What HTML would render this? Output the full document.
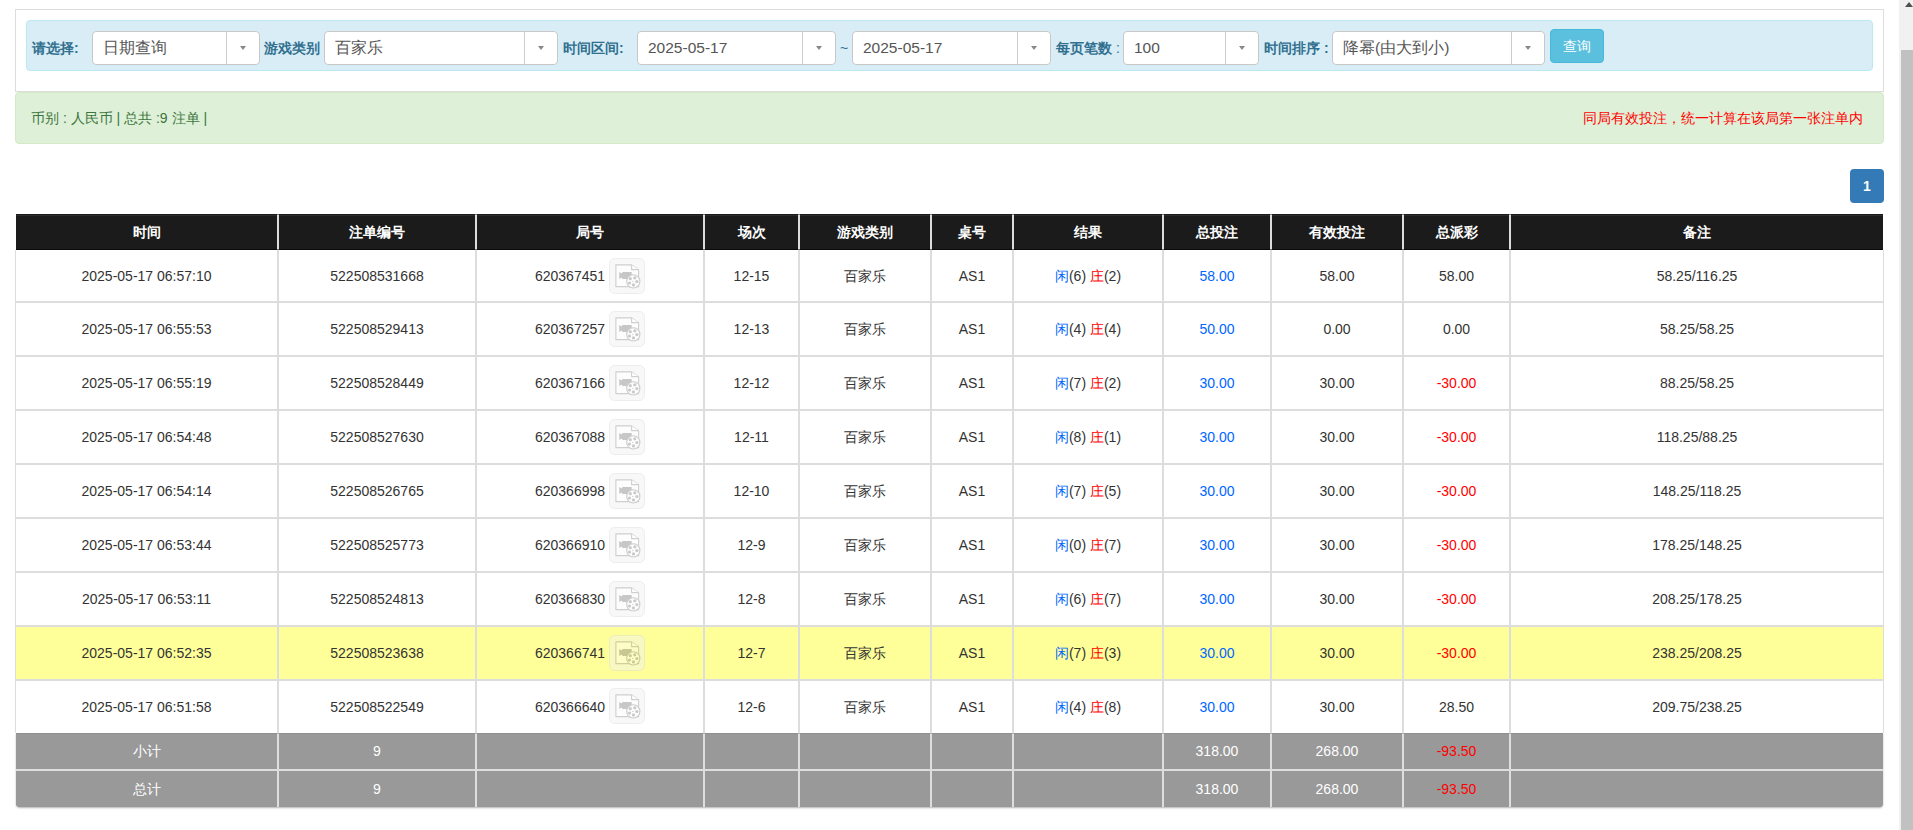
<!DOCTYPE html>
<html><head><meta charset="utf-8"><title>report</title>
<style>
html,body{margin:0;padding:0;background:#fff;overflow:hidden;width:1913px;height:830px;}
body{font-family:"Liberation Sans",sans-serif;font-size:14px;color:#333;position:relative;}
.panel{position:absolute;left:15px;top:9px;width:1867px;height:81px;border:1px solid #ddd;background:#fff;}
.info{position:absolute;left:26px;top:20px;width:1845px;height:49px;border:1px solid #bce8f1;background:#d9edf7;border-radius:4px;}
.lab{position:absolute;top:38px;height:20px;line-height:20px;font-weight:bold;color:#31708f;white-space:nowrap;}
.nb{font-weight:normal;}
.sel{position:absolute;top:31px;height:32px;border:1px solid #c8c8c8;border-radius:4px;background:#fff;box-sizing:content-box;}
.sel .st{position:absolute;left:10px;top:6px;line-height:20px;font-size:15.5px;color:#555;white-space:nowrap;}
.sel .sd{position:absolute;top:0;width:1px;height:32px;background:#ccc;}
.sel .arr{position:absolute;top:14px;width:0;height:0;border-left:3.5px solid transparent;border-right:3.5px solid transparent;border-top:4px solid #888;}
.btn{position:absolute;left:1550px;top:29px;width:52px;height:32px;border:1px solid #46b8da;background:#5bc0de;border-radius:4px;color:#fff;text-align:center;line-height:32px;font-weight:500;}
.succ{position:absolute;left:15px;top:92px;width:1867px;height:50px;border:1px solid #d6e9c6;background:#dff0d8;border-radius:4px;color:#3c763d;}
.succ .l{position:absolute;left:15px;top:15px;line-height:20px;white-space:nowrap;}
.succ .r{position:absolute;right:20px;top:15px;line-height:20px;color:#f00;white-space:nowrap;}
.page{position:absolute;left:1850px;top:169px;width:34px;height:34px;background:#337ab7;border-radius:4px;color:#fff;font-weight:bold;text-align:center;line-height:34px;}
.c{position:absolute;box-sizing:border-box;display:flex;align-items:center;justify-content:center;white-space:nowrap;border:0 solid #ddd;}
.in{display:block;line-height:20px;position:relative;top:-1px;}
.th{background:#1b1b1b;color:#fff;font-weight:bold;border-color:#dcdcdc;border-top:1px solid #1a1a1a;border-bottom:1px solid #0a0a0a;box-shadow:inset 0 1px 0 #2a2a2a;}
.th .in{top:0px;}
.tr .in{top:0px;}
.tf1 .in{top:0px;}
.tr{background:#fff;border-left-width:1px;border-right-width:1px;}
.yel{background:#ffff99;}
.tf{background:#999;color:#fff;border-color:#dedede;}
.tf0{border-top:1px solid #8f8f8f;border-bottom:1px solid #dedede;}
.tf1{border-top:1px solid #dedede;}
.tfoot{position:absolute;left:16px;top:733px;width:1867px;height:74px;border-radius:0 0 4px 4px;box-shadow:0 1px 2px rgba(0,0,0,.3);background:#999;}
.blu{color:#0066ff;}
.red{color:#ff0000;}
.gid{padding-right:40px;}
.ico{position:absolute;width:36px;height:36px;}
.ico svg{display:block;}
.sb{position:absolute;left:1899px;top:0;width:17px;height:830px;background:#f1f1f1;}
.sb .thumb{position:absolute;left:2px;top:50px;width:13px;height:780px;background:#c1c1c1;}
.sb .up{position:absolute;left:6px;top:2px;width:0;height:0;border-left:4px solid transparent;border-right:4px solid transparent;border-bottom:5px solid #505050;}
</style></head><body>
<div class="panel"></div>
<div class="info"></div>
<div class="lab" style="left:32px">请选择:</div><div class="sel" style="left:92px;width:166px"><span class="st">日期查询</span><div class="sd" style="left:133px"></div><div class="arr" style="left:147px"></div></div><div class="lab" style="left:264px">游戏类别</div><div class="sel" style="left:324px;width:232px"><span class="st">百家乐</span><div class="sd" style="left:199px"></div><div class="arr" style="left:213px"></div></div><div class="lab" style="left:563px">时间区间:</div><div class="sel" style="left:637px;width:197px"><span class="st">2025-05-17</span><div class="sd" style="left:164px"></div><div class="arr" style="left:178px"></div></div><div class="lab nb" style="left:840px">~</div><div class="sel" style="left:852px;width:197px"><span class="st">2025-05-17</span><div class="sd" style="left:164px"></div><div class="arr" style="left:178px"></div></div><div class="lab" style="left:1056px">每页笔数 <span class="nb">:</span></div><div class="sel" style="left:1123px;width:134px"><span class="st">100</span><div class="sd" style="left:101px"></div><div class="arr" style="left:115px"></div></div><div class="lab" style="left:1264px">时间排序 :</div><div class="sel" style="left:1332px;width:211px"><span class="st">降幂(由大到小)</span><div class="sd" style="left:178px"></div><div class="arr" style="left:192px"></div></div><div class="btn">查询</div>
<div class="succ"><span class="l">币别 : 人民币 | 总共 :9 注单 |</span><span class="r">同局有效投注，统一计算在该局第一张注单内</span></div>
<div class="page">1</div>
<div class="tfoot"></div>
<div class="c th" style="left:16px;top:214px;width:262px;height:36px;border-right-width:1px"><span class="in">时间</span></div>
<div class="c th" style="left:278px;top:214px;width:198px;height:36px;border-left-width:1px;border-right-width:1px"><span class="in">注单编号</span></div>
<div class="c th" style="left:476px;top:214px;width:228px;height:36px;border-left-width:1px;border-right-width:1px"><span class="in">局号</span></div>
<div class="c th" style="left:704px;top:214px;width:95px;height:36px;border-left-width:1px;border-right-width:1px"><span class="in">场次</span></div>
<div class="c th" style="left:799px;top:214px;width:132px;height:36px;border-left-width:1px;border-right-width:1px"><span class="in">游戏类别</span></div>
<div class="c th" style="left:931px;top:214px;width:82px;height:36px;border-left-width:1px;border-right-width:1px"><span class="in">桌号</span></div>
<div class="c th" style="left:1013px;top:214px;width:150px;height:36px;border-left-width:1px;border-right-width:1px"><span class="in">结果</span></div>
<div class="c th" style="left:1163px;top:214px;width:108px;height:36px;border-left-width:1px;border-right-width:1px"><span class="in">总投注</span></div>
<div class="c th" style="left:1271px;top:214px;width:132px;height:36px;border-left-width:1px;border-right-width:1px"><span class="in">有效投注</span></div>
<div class="c th" style="left:1403px;top:214px;width:107px;height:36px;border-left-width:1px;border-right-width:1px"><span class="in">总派彩</span></div>
<div class="c th" style="left:1510px;top:214px;width:373px;height:36px;border-left-width:1px"><span class="in">备注</span></div>
<div class="c tr" style="left:15px;top:250px;width:263px;height:52px;border-top-width:0px;border-bottom-width:1px"><span class="in">2025-05-17 06:57:10</span></div>
<div class="c tr" style="left:278px;top:250px;width:198px;height:52px;border-top-width:0px;border-bottom-width:1px"><span class="in">522508531668</span></div>
<div class="c tr" style="left:476px;top:250px;width:228px;height:52px;border-top-width:0px;border-bottom-width:1px"><span class="in"><span class="gid">620367451</span></span><span class="ico" style="left:132px;top:8px"><svg width="36" height="36" viewBox="0 0 36 36" style="opacity:.47"><rect x="0.5" y="0.5" width="35" height="35" rx="5" fill="#f2f2f2" stroke="#d9d9d9"/><path d="M6.9 6.9H22.6L29.6 11.8V28.6H6.9Z" fill="#fcfcfc" stroke="#9a9a9a" stroke-width="1.1"/><path d="M22.6 6.9V11.6H29.6" fill="#fff" stroke="#9a9a9a" stroke-width="1.1"/><path d="M10.2 14L12.6 15.5L13.5 14H22.7V20.9H13.5L12.6 19.4L10.2 20.9Z" fill="#8a8a8a"/><circle cx="24.3" cy="23.4" r="6.6" fill="#fcfcfc" stroke="#949494" stroke-width="1.1"/><circle cx="21.3" cy="20.7" r="1.6" fill="#8f8f8f"/><circle cx="25.8" cy="19.8" r="1.6" fill="#8f8f8f"/><circle cx="27.9" cy="23.6" r="1.6" fill="#8f8f8f"/><circle cx="24.5" cy="26.9" r="1.6" fill="#8f8f8f"/><circle cx="20.5" cy="25" r="1.6" fill="#8f8f8f"/><circle cx="23.8" cy="23.4" r=".6" fill="#8f8f8f"/></svg></span></div>
<div class="c tr" style="left:704px;top:250px;width:95px;height:52px;border-top-width:0px;border-bottom-width:1px"><span class="in">12-15</span></div>
<div class="c tr" style="left:799px;top:250px;width:132px;height:52px;border-top-width:0px;border-bottom-width:1px"><span class="in">百家乐</span></div>
<div class="c tr" style="left:931px;top:250px;width:82px;height:52px;border-top-width:0px;border-bottom-width:1px"><span class="in">AS1</span></div>
<div class="c tr" style="left:1013px;top:250px;width:150px;height:52px;border-top-width:0px;border-bottom-width:1px"><span class="in"><span class="blu">闲</span>(6) <span class="red">庄</span>(2)</span></div>
<div class="c tr" style="left:1163px;top:250px;width:108px;height:52px;border-top-width:0px;border-bottom-width:1px"><span class="in"><span class="blu">58.00</span></span></div>
<div class="c tr" style="left:1271px;top:250px;width:132px;height:52px;border-top-width:0px;border-bottom-width:1px"><span class="in">58.00</span></div>
<div class="c tr" style="left:1403px;top:250px;width:107px;height:52px;border-top-width:0px;border-bottom-width:1px"><span class="in"><span>58.00</span></span></div>
<div class="c tr" style="left:1510px;top:250px;width:374px;height:52px;border-top-width:0px;border-bottom-width:1px"><span class="in">58.25/116.25</span></div>
<div class="c tr" style="left:15px;top:302px;width:263px;height:54px;border-top-width:1px;border-bottom-width:1px"><span class="in">2025-05-17 06:55:53</span></div>
<div class="c tr" style="left:278px;top:302px;width:198px;height:54px;border-top-width:1px;border-bottom-width:1px"><span class="in">522508529413</span></div>
<div class="c tr" style="left:476px;top:302px;width:228px;height:54px;border-top-width:1px;border-bottom-width:1px"><span class="in"><span class="gid">620367257</span></span><span class="ico" style="left:132px;top:8px"><svg width="36" height="36" viewBox="0 0 36 36" style="opacity:.47"><rect x="0.5" y="0.5" width="35" height="35" rx="5" fill="#f2f2f2" stroke="#d9d9d9"/><path d="M6.9 6.9H22.6L29.6 11.8V28.6H6.9Z" fill="#fcfcfc" stroke="#9a9a9a" stroke-width="1.1"/><path d="M22.6 6.9V11.6H29.6" fill="#fff" stroke="#9a9a9a" stroke-width="1.1"/><path d="M10.2 14L12.6 15.5L13.5 14H22.7V20.9H13.5L12.6 19.4L10.2 20.9Z" fill="#8a8a8a"/><circle cx="24.3" cy="23.4" r="6.6" fill="#fcfcfc" stroke="#949494" stroke-width="1.1"/><circle cx="21.3" cy="20.7" r="1.6" fill="#8f8f8f"/><circle cx="25.8" cy="19.8" r="1.6" fill="#8f8f8f"/><circle cx="27.9" cy="23.6" r="1.6" fill="#8f8f8f"/><circle cx="24.5" cy="26.9" r="1.6" fill="#8f8f8f"/><circle cx="20.5" cy="25" r="1.6" fill="#8f8f8f"/><circle cx="23.8" cy="23.4" r=".6" fill="#8f8f8f"/></svg></span></div>
<div class="c tr" style="left:704px;top:302px;width:95px;height:54px;border-top-width:1px;border-bottom-width:1px"><span class="in">12-13</span></div>
<div class="c tr" style="left:799px;top:302px;width:132px;height:54px;border-top-width:1px;border-bottom-width:1px"><span class="in">百家乐</span></div>
<div class="c tr" style="left:931px;top:302px;width:82px;height:54px;border-top-width:1px;border-bottom-width:1px"><span class="in">AS1</span></div>
<div class="c tr" style="left:1013px;top:302px;width:150px;height:54px;border-top-width:1px;border-bottom-width:1px"><span class="in"><span class="blu">闲</span>(4) <span class="red">庄</span>(4)</span></div>
<div class="c tr" style="left:1163px;top:302px;width:108px;height:54px;border-top-width:1px;border-bottom-width:1px"><span class="in"><span class="blu">50.00</span></span></div>
<div class="c tr" style="left:1271px;top:302px;width:132px;height:54px;border-top-width:1px;border-bottom-width:1px"><span class="in">0.00</span></div>
<div class="c tr" style="left:1403px;top:302px;width:107px;height:54px;border-top-width:1px;border-bottom-width:1px"><span class="in"><span>0.00</span></span></div>
<div class="c tr" style="left:1510px;top:302px;width:374px;height:54px;border-top-width:1px;border-bottom-width:1px"><span class="in">58.25/58.25</span></div>
<div class="c tr" style="left:15px;top:356px;width:263px;height:54px;border-top-width:1px;border-bottom-width:1px"><span class="in">2025-05-17 06:55:19</span></div>
<div class="c tr" style="left:278px;top:356px;width:198px;height:54px;border-top-width:1px;border-bottom-width:1px"><span class="in">522508528449</span></div>
<div class="c tr" style="left:476px;top:356px;width:228px;height:54px;border-top-width:1px;border-bottom-width:1px"><span class="in"><span class="gid">620367166</span></span><span class="ico" style="left:132px;top:8px"><svg width="36" height="36" viewBox="0 0 36 36" style="opacity:.47"><rect x="0.5" y="0.5" width="35" height="35" rx="5" fill="#f2f2f2" stroke="#d9d9d9"/><path d="M6.9 6.9H22.6L29.6 11.8V28.6H6.9Z" fill="#fcfcfc" stroke="#9a9a9a" stroke-width="1.1"/><path d="M22.6 6.9V11.6H29.6" fill="#fff" stroke="#9a9a9a" stroke-width="1.1"/><path d="M10.2 14L12.6 15.5L13.5 14H22.7V20.9H13.5L12.6 19.4L10.2 20.9Z" fill="#8a8a8a"/><circle cx="24.3" cy="23.4" r="6.6" fill="#fcfcfc" stroke="#949494" stroke-width="1.1"/><circle cx="21.3" cy="20.7" r="1.6" fill="#8f8f8f"/><circle cx="25.8" cy="19.8" r="1.6" fill="#8f8f8f"/><circle cx="27.9" cy="23.6" r="1.6" fill="#8f8f8f"/><circle cx="24.5" cy="26.9" r="1.6" fill="#8f8f8f"/><circle cx="20.5" cy="25" r="1.6" fill="#8f8f8f"/><circle cx="23.8" cy="23.4" r=".6" fill="#8f8f8f"/></svg></span></div>
<div class="c tr" style="left:704px;top:356px;width:95px;height:54px;border-top-width:1px;border-bottom-width:1px"><span class="in">12-12</span></div>
<div class="c tr" style="left:799px;top:356px;width:132px;height:54px;border-top-width:1px;border-bottom-width:1px"><span class="in">百家乐</span></div>
<div class="c tr" style="left:931px;top:356px;width:82px;height:54px;border-top-width:1px;border-bottom-width:1px"><span class="in">AS1</span></div>
<div class="c tr" style="left:1013px;top:356px;width:150px;height:54px;border-top-width:1px;border-bottom-width:1px"><span class="in"><span class="blu">闲</span>(7) <span class="red">庄</span>(2)</span></div>
<div class="c tr" style="left:1163px;top:356px;width:108px;height:54px;border-top-width:1px;border-bottom-width:1px"><span class="in"><span class="blu">30.00</span></span></div>
<div class="c tr" style="left:1271px;top:356px;width:132px;height:54px;border-top-width:1px;border-bottom-width:1px"><span class="in">30.00</span></div>
<div class="c tr" style="left:1403px;top:356px;width:107px;height:54px;border-top-width:1px;border-bottom-width:1px"><span class="in"><span class="red">-30.00</span></span></div>
<div class="c tr" style="left:1510px;top:356px;width:374px;height:54px;border-top-width:1px;border-bottom-width:1px"><span class="in">88.25/58.25</span></div>
<div class="c tr" style="left:15px;top:410px;width:263px;height:54px;border-top-width:1px;border-bottom-width:1px"><span class="in">2025-05-17 06:54:48</span></div>
<div class="c tr" style="left:278px;top:410px;width:198px;height:54px;border-top-width:1px;border-bottom-width:1px"><span class="in">522508527630</span></div>
<div class="c tr" style="left:476px;top:410px;width:228px;height:54px;border-top-width:1px;border-bottom-width:1px"><span class="in"><span class="gid">620367088</span></span><span class="ico" style="left:132px;top:8px"><svg width="36" height="36" viewBox="0 0 36 36" style="opacity:.47"><rect x="0.5" y="0.5" width="35" height="35" rx="5" fill="#f2f2f2" stroke="#d9d9d9"/><path d="M6.9 6.9H22.6L29.6 11.8V28.6H6.9Z" fill="#fcfcfc" stroke="#9a9a9a" stroke-width="1.1"/><path d="M22.6 6.9V11.6H29.6" fill="#fff" stroke="#9a9a9a" stroke-width="1.1"/><path d="M10.2 14L12.6 15.5L13.5 14H22.7V20.9H13.5L12.6 19.4L10.2 20.9Z" fill="#8a8a8a"/><circle cx="24.3" cy="23.4" r="6.6" fill="#fcfcfc" stroke="#949494" stroke-width="1.1"/><circle cx="21.3" cy="20.7" r="1.6" fill="#8f8f8f"/><circle cx="25.8" cy="19.8" r="1.6" fill="#8f8f8f"/><circle cx="27.9" cy="23.6" r="1.6" fill="#8f8f8f"/><circle cx="24.5" cy="26.9" r="1.6" fill="#8f8f8f"/><circle cx="20.5" cy="25" r="1.6" fill="#8f8f8f"/><circle cx="23.8" cy="23.4" r=".6" fill="#8f8f8f"/></svg></span></div>
<div class="c tr" style="left:704px;top:410px;width:95px;height:54px;border-top-width:1px;border-bottom-width:1px"><span class="in">12-11</span></div>
<div class="c tr" style="left:799px;top:410px;width:132px;height:54px;border-top-width:1px;border-bottom-width:1px"><span class="in">百家乐</span></div>
<div class="c tr" style="left:931px;top:410px;width:82px;height:54px;border-top-width:1px;border-bottom-width:1px"><span class="in">AS1</span></div>
<div class="c tr" style="left:1013px;top:410px;width:150px;height:54px;border-top-width:1px;border-bottom-width:1px"><span class="in"><span class="blu">闲</span>(8) <span class="red">庄</span>(1)</span></div>
<div class="c tr" style="left:1163px;top:410px;width:108px;height:54px;border-top-width:1px;border-bottom-width:1px"><span class="in"><span class="blu">30.00</span></span></div>
<div class="c tr" style="left:1271px;top:410px;width:132px;height:54px;border-top-width:1px;border-bottom-width:1px"><span class="in">30.00</span></div>
<div class="c tr" style="left:1403px;top:410px;width:107px;height:54px;border-top-width:1px;border-bottom-width:1px"><span class="in"><span class="red">-30.00</span></span></div>
<div class="c tr" style="left:1510px;top:410px;width:374px;height:54px;border-top-width:1px;border-bottom-width:1px"><span class="in">118.25/88.25</span></div>
<div class="c tr" style="left:15px;top:464px;width:263px;height:54px;border-top-width:1px;border-bottom-width:1px"><span class="in">2025-05-17 06:54:14</span></div>
<div class="c tr" style="left:278px;top:464px;width:198px;height:54px;border-top-width:1px;border-bottom-width:1px"><span class="in">522508526765</span></div>
<div class="c tr" style="left:476px;top:464px;width:228px;height:54px;border-top-width:1px;border-bottom-width:1px"><span class="in"><span class="gid">620366998</span></span><span class="ico" style="left:132px;top:8px"><svg width="36" height="36" viewBox="0 0 36 36" style="opacity:.47"><rect x="0.5" y="0.5" width="35" height="35" rx="5" fill="#f2f2f2" stroke="#d9d9d9"/><path d="M6.9 6.9H22.6L29.6 11.8V28.6H6.9Z" fill="#fcfcfc" stroke="#9a9a9a" stroke-width="1.1"/><path d="M22.6 6.9V11.6H29.6" fill="#fff" stroke="#9a9a9a" stroke-width="1.1"/><path d="M10.2 14L12.6 15.5L13.5 14H22.7V20.9H13.5L12.6 19.4L10.2 20.9Z" fill="#8a8a8a"/><circle cx="24.3" cy="23.4" r="6.6" fill="#fcfcfc" stroke="#949494" stroke-width="1.1"/><circle cx="21.3" cy="20.7" r="1.6" fill="#8f8f8f"/><circle cx="25.8" cy="19.8" r="1.6" fill="#8f8f8f"/><circle cx="27.9" cy="23.6" r="1.6" fill="#8f8f8f"/><circle cx="24.5" cy="26.9" r="1.6" fill="#8f8f8f"/><circle cx="20.5" cy="25" r="1.6" fill="#8f8f8f"/><circle cx="23.8" cy="23.4" r=".6" fill="#8f8f8f"/></svg></span></div>
<div class="c tr" style="left:704px;top:464px;width:95px;height:54px;border-top-width:1px;border-bottom-width:1px"><span class="in">12-10</span></div>
<div class="c tr" style="left:799px;top:464px;width:132px;height:54px;border-top-width:1px;border-bottom-width:1px"><span class="in">百家乐</span></div>
<div class="c tr" style="left:931px;top:464px;width:82px;height:54px;border-top-width:1px;border-bottom-width:1px"><span class="in">AS1</span></div>
<div class="c tr" style="left:1013px;top:464px;width:150px;height:54px;border-top-width:1px;border-bottom-width:1px"><span class="in"><span class="blu">闲</span>(7) <span class="red">庄</span>(5)</span></div>
<div class="c tr" style="left:1163px;top:464px;width:108px;height:54px;border-top-width:1px;border-bottom-width:1px"><span class="in"><span class="blu">30.00</span></span></div>
<div class="c tr" style="left:1271px;top:464px;width:132px;height:54px;border-top-width:1px;border-bottom-width:1px"><span class="in">30.00</span></div>
<div class="c tr" style="left:1403px;top:464px;width:107px;height:54px;border-top-width:1px;border-bottom-width:1px"><span class="in"><span class="red">-30.00</span></span></div>
<div class="c tr" style="left:1510px;top:464px;width:374px;height:54px;border-top-width:1px;border-bottom-width:1px"><span class="in">148.25/118.25</span></div>
<div class="c tr" style="left:15px;top:518px;width:263px;height:54px;border-top-width:1px;border-bottom-width:1px"><span class="in">2025-05-17 06:53:44</span></div>
<div class="c tr" style="left:278px;top:518px;width:198px;height:54px;border-top-width:1px;border-bottom-width:1px"><span class="in">522508525773</span></div>
<div class="c tr" style="left:476px;top:518px;width:228px;height:54px;border-top-width:1px;border-bottom-width:1px"><span class="in"><span class="gid">620366910</span></span><span class="ico" style="left:132px;top:8px"><svg width="36" height="36" viewBox="0 0 36 36" style="opacity:.47"><rect x="0.5" y="0.5" width="35" height="35" rx="5" fill="#f2f2f2" stroke="#d9d9d9"/><path d="M6.9 6.9H22.6L29.6 11.8V28.6H6.9Z" fill="#fcfcfc" stroke="#9a9a9a" stroke-width="1.1"/><path d="M22.6 6.9V11.6H29.6" fill="#fff" stroke="#9a9a9a" stroke-width="1.1"/><path d="M10.2 14L12.6 15.5L13.5 14H22.7V20.9H13.5L12.6 19.4L10.2 20.9Z" fill="#8a8a8a"/><circle cx="24.3" cy="23.4" r="6.6" fill="#fcfcfc" stroke="#949494" stroke-width="1.1"/><circle cx="21.3" cy="20.7" r="1.6" fill="#8f8f8f"/><circle cx="25.8" cy="19.8" r="1.6" fill="#8f8f8f"/><circle cx="27.9" cy="23.6" r="1.6" fill="#8f8f8f"/><circle cx="24.5" cy="26.9" r="1.6" fill="#8f8f8f"/><circle cx="20.5" cy="25" r="1.6" fill="#8f8f8f"/><circle cx="23.8" cy="23.4" r=".6" fill="#8f8f8f"/></svg></span></div>
<div class="c tr" style="left:704px;top:518px;width:95px;height:54px;border-top-width:1px;border-bottom-width:1px"><span class="in">12-9</span></div>
<div class="c tr" style="left:799px;top:518px;width:132px;height:54px;border-top-width:1px;border-bottom-width:1px"><span class="in">百家乐</span></div>
<div class="c tr" style="left:931px;top:518px;width:82px;height:54px;border-top-width:1px;border-bottom-width:1px"><span class="in">AS1</span></div>
<div class="c tr" style="left:1013px;top:518px;width:150px;height:54px;border-top-width:1px;border-bottom-width:1px"><span class="in"><span class="blu">闲</span>(0) <span class="red">庄</span>(7)</span></div>
<div class="c tr" style="left:1163px;top:518px;width:108px;height:54px;border-top-width:1px;border-bottom-width:1px"><span class="in"><span class="blu">30.00</span></span></div>
<div class="c tr" style="left:1271px;top:518px;width:132px;height:54px;border-top-width:1px;border-bottom-width:1px"><span class="in">30.00</span></div>
<div class="c tr" style="left:1403px;top:518px;width:107px;height:54px;border-top-width:1px;border-bottom-width:1px"><span class="in"><span class="red">-30.00</span></span></div>
<div class="c tr" style="left:1510px;top:518px;width:374px;height:54px;border-top-width:1px;border-bottom-width:1px"><span class="in">178.25/148.25</span></div>
<div class="c tr" style="left:15px;top:572px;width:263px;height:54px;border-top-width:1px;border-bottom-width:1px"><span class="in">2025-05-17 06:53:11</span></div>
<div class="c tr" style="left:278px;top:572px;width:198px;height:54px;border-top-width:1px;border-bottom-width:1px"><span class="in">522508524813</span></div>
<div class="c tr" style="left:476px;top:572px;width:228px;height:54px;border-top-width:1px;border-bottom-width:1px"><span class="in"><span class="gid">620366830</span></span><span class="ico" style="left:132px;top:8px"><svg width="36" height="36" viewBox="0 0 36 36" style="opacity:.47"><rect x="0.5" y="0.5" width="35" height="35" rx="5" fill="#f2f2f2" stroke="#d9d9d9"/><path d="M6.9 6.9H22.6L29.6 11.8V28.6H6.9Z" fill="#fcfcfc" stroke="#9a9a9a" stroke-width="1.1"/><path d="M22.6 6.9V11.6H29.6" fill="#fff" stroke="#9a9a9a" stroke-width="1.1"/><path d="M10.2 14L12.6 15.5L13.5 14H22.7V20.9H13.5L12.6 19.4L10.2 20.9Z" fill="#8a8a8a"/><circle cx="24.3" cy="23.4" r="6.6" fill="#fcfcfc" stroke="#949494" stroke-width="1.1"/><circle cx="21.3" cy="20.7" r="1.6" fill="#8f8f8f"/><circle cx="25.8" cy="19.8" r="1.6" fill="#8f8f8f"/><circle cx="27.9" cy="23.6" r="1.6" fill="#8f8f8f"/><circle cx="24.5" cy="26.9" r="1.6" fill="#8f8f8f"/><circle cx="20.5" cy="25" r="1.6" fill="#8f8f8f"/><circle cx="23.8" cy="23.4" r=".6" fill="#8f8f8f"/></svg></span></div>
<div class="c tr" style="left:704px;top:572px;width:95px;height:54px;border-top-width:1px;border-bottom-width:1px"><span class="in">12-8</span></div>
<div class="c tr" style="left:799px;top:572px;width:132px;height:54px;border-top-width:1px;border-bottom-width:1px"><span class="in">百家乐</span></div>
<div class="c tr" style="left:931px;top:572px;width:82px;height:54px;border-top-width:1px;border-bottom-width:1px"><span class="in">AS1</span></div>
<div class="c tr" style="left:1013px;top:572px;width:150px;height:54px;border-top-width:1px;border-bottom-width:1px"><span class="in"><span class="blu">闲</span>(6) <span class="red">庄</span>(7)</span></div>
<div class="c tr" style="left:1163px;top:572px;width:108px;height:54px;border-top-width:1px;border-bottom-width:1px"><span class="in"><span class="blu">30.00</span></span></div>
<div class="c tr" style="left:1271px;top:572px;width:132px;height:54px;border-top-width:1px;border-bottom-width:1px"><span class="in">30.00</span></div>
<div class="c tr" style="left:1403px;top:572px;width:107px;height:54px;border-top-width:1px;border-bottom-width:1px"><span class="in"><span class="red">-30.00</span></span></div>
<div class="c tr" style="left:1510px;top:572px;width:374px;height:54px;border-top-width:1px;border-bottom-width:1px"><span class="in">208.25/178.25</span></div>
<div class="c tr yel" style="left:15px;top:626px;width:263px;height:54px;border-top-width:1px;border-bottom-width:1px"><span class="in">2025-05-17 06:52:35</span></div>
<div class="c tr yel" style="left:278px;top:626px;width:198px;height:54px;border-top-width:1px;border-bottom-width:1px"><span class="in">522508523638</span></div>
<div class="c tr yel" style="left:476px;top:626px;width:228px;height:54px;border-top-width:1px;border-bottom-width:1px"><span class="in"><span class="gid">620366741</span></span><span class="ico" style="left:132px;top:8px"><svg width="36" height="36" viewBox="0 0 36 36" style="opacity:.47"><rect x="0.5" y="0.5" width="35" height="35" rx="5" fill="#f2f2f2" stroke="#d9d9d9"/><path d="M6.9 6.9H22.6L29.6 11.8V28.6H6.9Z" fill="#fcfcfc" stroke="#9a9a9a" stroke-width="1.1"/><path d="M22.6 6.9V11.6H29.6" fill="#fff" stroke="#9a9a9a" stroke-width="1.1"/><path d="M10.2 14L12.6 15.5L13.5 14H22.7V20.9H13.5L12.6 19.4L10.2 20.9Z" fill="#8a8a8a"/><circle cx="24.3" cy="23.4" r="6.6" fill="#fcfcfc" stroke="#949494" stroke-width="1.1"/><circle cx="21.3" cy="20.7" r="1.6" fill="#8f8f8f"/><circle cx="25.8" cy="19.8" r="1.6" fill="#8f8f8f"/><circle cx="27.9" cy="23.6" r="1.6" fill="#8f8f8f"/><circle cx="24.5" cy="26.9" r="1.6" fill="#8f8f8f"/><circle cx="20.5" cy="25" r="1.6" fill="#8f8f8f"/><circle cx="23.8" cy="23.4" r=".6" fill="#8f8f8f"/></svg></span></div>
<div class="c tr yel" style="left:704px;top:626px;width:95px;height:54px;border-top-width:1px;border-bottom-width:1px"><span class="in">12-7</span></div>
<div class="c tr yel" style="left:799px;top:626px;width:132px;height:54px;border-top-width:1px;border-bottom-width:1px"><span class="in">百家乐</span></div>
<div class="c tr yel" style="left:931px;top:626px;width:82px;height:54px;border-top-width:1px;border-bottom-width:1px"><span class="in">AS1</span></div>
<div class="c tr yel" style="left:1013px;top:626px;width:150px;height:54px;border-top-width:1px;border-bottom-width:1px"><span class="in"><span class="blu">闲</span>(7) <span class="red">庄</span>(3)</span></div>
<div class="c tr yel" style="left:1163px;top:626px;width:108px;height:54px;border-top-width:1px;border-bottom-width:1px"><span class="in"><span class="blu">30.00</span></span></div>
<div class="c tr yel" style="left:1271px;top:626px;width:132px;height:54px;border-top-width:1px;border-bottom-width:1px"><span class="in">30.00</span></div>
<div class="c tr yel" style="left:1403px;top:626px;width:107px;height:54px;border-top-width:1px;border-bottom-width:1px"><span class="in"><span class="red">-30.00</span></span></div>
<div class="c tr yel" style="left:1510px;top:626px;width:374px;height:54px;border-top-width:1px;border-bottom-width:1px"><span class="in">238.25/208.25</span></div>
<div class="c tr" style="left:15px;top:680px;width:263px;height:53px;border-top-width:1px;border-bottom-width:0px"><span class="in">2025-05-17 06:51:58</span></div>
<div class="c tr" style="left:278px;top:680px;width:198px;height:53px;border-top-width:1px;border-bottom-width:0px"><span class="in">522508522549</span></div>
<div class="c tr" style="left:476px;top:680px;width:228px;height:53px;border-top-width:1px;border-bottom-width:0px"><span class="in"><span class="gid">620366640</span></span><span class="ico" style="left:132px;top:7px"><svg width="36" height="36" viewBox="0 0 36 36" style="opacity:.47"><rect x="0.5" y="0.5" width="35" height="35" rx="5" fill="#f2f2f2" stroke="#d9d9d9"/><path d="M6.9 6.9H22.6L29.6 11.8V28.6H6.9Z" fill="#fcfcfc" stroke="#9a9a9a" stroke-width="1.1"/><path d="M22.6 6.9V11.6H29.6" fill="#fff" stroke="#9a9a9a" stroke-width="1.1"/><path d="M10.2 14L12.6 15.5L13.5 14H22.7V20.9H13.5L12.6 19.4L10.2 20.9Z" fill="#8a8a8a"/><circle cx="24.3" cy="23.4" r="6.6" fill="#fcfcfc" stroke="#949494" stroke-width="1.1"/><circle cx="21.3" cy="20.7" r="1.6" fill="#8f8f8f"/><circle cx="25.8" cy="19.8" r="1.6" fill="#8f8f8f"/><circle cx="27.9" cy="23.6" r="1.6" fill="#8f8f8f"/><circle cx="24.5" cy="26.9" r="1.6" fill="#8f8f8f"/><circle cx="20.5" cy="25" r="1.6" fill="#8f8f8f"/><circle cx="23.8" cy="23.4" r=".6" fill="#8f8f8f"/></svg></span></div>
<div class="c tr" style="left:704px;top:680px;width:95px;height:53px;border-top-width:1px;border-bottom-width:0px"><span class="in">12-6</span></div>
<div class="c tr" style="left:799px;top:680px;width:132px;height:53px;border-top-width:1px;border-bottom-width:0px"><span class="in">百家乐</span></div>
<div class="c tr" style="left:931px;top:680px;width:82px;height:53px;border-top-width:1px;border-bottom-width:0px"><span class="in">AS1</span></div>
<div class="c tr" style="left:1013px;top:680px;width:150px;height:53px;border-top-width:1px;border-bottom-width:0px"><span class="in"><span class="blu">闲</span>(4) <span class="red">庄</span>(8)</span></div>
<div class="c tr" style="left:1163px;top:680px;width:108px;height:53px;border-top-width:1px;border-bottom-width:0px"><span class="in"><span class="blu">30.00</span></span></div>
<div class="c tr" style="left:1271px;top:680px;width:132px;height:53px;border-top-width:1px;border-bottom-width:0px"><span class="in">30.00</span></div>
<div class="c tr" style="left:1403px;top:680px;width:107px;height:53px;border-top-width:1px;border-bottom-width:0px"><span class="in"><span>28.50</span></span></div>
<div class="c tr" style="left:1510px;top:680px;width:374px;height:53px;border-top-width:1px;border-bottom-width:0px"><span class="in">209.75/238.25</span></div>
<div class="c tf tf0" style="left:16px;top:733px;width:262px;height:37px;border-right-width:1px"><span class="in">小计</span></div>
<div class="c tf tf0" style="left:278px;top:733px;width:198px;height:37px;border-left-width:1px;border-right-width:1px"><span class="in">9</span></div>
<div class="c tf tf0" style="left:476px;top:733px;width:228px;height:37px;border-left-width:1px;border-right-width:1px"><span class="in"></span></div>
<div class="c tf tf0" style="left:704px;top:733px;width:95px;height:37px;border-left-width:1px;border-right-width:1px"><span class="in"></span></div>
<div class="c tf tf0" style="left:799px;top:733px;width:132px;height:37px;border-left-width:1px;border-right-width:1px"><span class="in"></span></div>
<div class="c tf tf0" style="left:931px;top:733px;width:82px;height:37px;border-left-width:1px;border-right-width:1px"><span class="in"></span></div>
<div class="c tf tf0" style="left:1013px;top:733px;width:150px;height:37px;border-left-width:1px;border-right-width:1px"><span class="in"></span></div>
<div class="c tf tf0" style="left:1163px;top:733px;width:108px;height:37px;border-left-width:1px;border-right-width:1px"><span class="in">318.00</span></div>
<div class="c tf tf0" style="left:1271px;top:733px;width:132px;height:37px;border-left-width:1px;border-right-width:1px"><span class="in">268.00</span></div>
<div class="c tf tf0" style="left:1403px;top:733px;width:107px;height:37px;border-left-width:1px;border-right-width:1px"><span class="in"><span class="red">-93.50</span></span></div>
<div class="c tf tf0" style="left:1510px;top:733px;width:373px;height:37px;border-left-width:1px"><span class="in"></span></div>
<div class="c tf tf1" style="left:16px;top:770px;width:262px;height:37px;border-right-width:1px;border-bottom-left-radius:4px"><span class="in">总计</span></div>
<div class="c tf tf1" style="left:278px;top:770px;width:198px;height:37px;border-left-width:1px;border-right-width:1px"><span class="in">9</span></div>
<div class="c tf tf1" style="left:476px;top:770px;width:228px;height:37px;border-left-width:1px;border-right-width:1px"><span class="in"></span></div>
<div class="c tf tf1" style="left:704px;top:770px;width:95px;height:37px;border-left-width:1px;border-right-width:1px"><span class="in"></span></div>
<div class="c tf tf1" style="left:799px;top:770px;width:132px;height:37px;border-left-width:1px;border-right-width:1px"><span class="in"></span></div>
<div class="c tf tf1" style="left:931px;top:770px;width:82px;height:37px;border-left-width:1px;border-right-width:1px"><span class="in"></span></div>
<div class="c tf tf1" style="left:1013px;top:770px;width:150px;height:37px;border-left-width:1px;border-right-width:1px"><span class="in"></span></div>
<div class="c tf tf1" style="left:1163px;top:770px;width:108px;height:37px;border-left-width:1px;border-right-width:1px"><span class="in">318.00</span></div>
<div class="c tf tf1" style="left:1271px;top:770px;width:132px;height:37px;border-left-width:1px;border-right-width:1px"><span class="in">268.00</span></div>
<div class="c tf tf1" style="left:1403px;top:770px;width:107px;height:37px;border-left-width:1px;border-right-width:1px"><span class="in"><span class="red">-93.50</span></span></div>
<div class="c tf tf1" style="left:1510px;top:770px;width:373px;height:37px;border-left-width:1px;border-bottom-right-radius:4px"><span class="in"></span></div>
<div class="sb"><div class="up"></div><div class="thumb"></div></div>
</body></html>
